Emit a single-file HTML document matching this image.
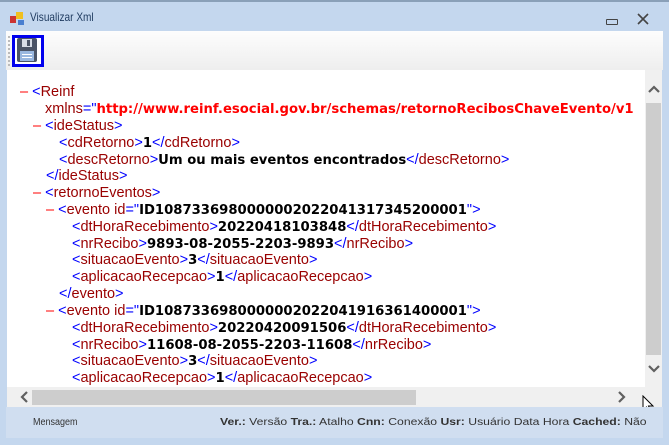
<!DOCTYPE html>
<html><head><meta charset="utf-8"><style>
body{margin:0;width:669px;height:445px;background:#c4d7ee;position:relative;overflow:hidden;font-family:"DejaVu Sans","Liberation Sans",sans-serif}
.abs{position:absolute}
.title{left:30px;top:10px;font-size:12px;color:#1e3a5f;font-family:"Liberation Sans",sans-serif;transform:scaleX(0.84);transform-origin:left}
.tb{left:6px;top:31px;width:657px;height:39px;background:linear-gradient(#fdfdfd,#eeeeee)}
.content{left:7px;top:70px;width:638px;height:317px;background:#fff;overflow:hidden}
.l{position:absolute;white-space:nowrap;font-family:"Liberation Sans",sans-serif;font-size:14.5px;line-height:17px}
.b{color:#0000ff}.r{color:#990000}.m{color:#ff0000}
.v{font-family:"DejaVu Sans",sans-serif;font-weight:bold;font-size:13.2px;color:#000}
.vr{font-family:"DejaVu Sans",sans-serif;font-weight:bold;font-size:13.2px;color:#ff0000}
.status{left:6px;top:407px;width:657px;height:31px;background:#d0def0;font-family:"Liberation Sans",sans-serif;font-size:10px;color:#333}
</style></head><body>
<div class="abs" style="left:0;top:0;width:669px;height:2px;background:#8aa0b8"></div>
<svg class="abs" style="left:10px;top:12px" width="16" height="14"><rect x="0" y="4" width="6" height="7" fill="#c33"/><rect x="6" y="0" width="7" height="7" fill="#f0c020"/><rect x="8" y="8" width="6" height="5" fill="#4a7fd0"/></svg>
<div class="abs title">Visualizar Xml</div>
<div class="abs" style="left:606px;top:19px;width:10px;height:4px;border:1px solid #444;border-radius:1px"></div>
<svg class="abs" style="left:637px;top:13px" width="12" height="12"><path d="M1 1 L11 11 M11 1 L1 11" stroke="#444" stroke-width="1.6"/></svg>
<div class="abs tb"></div>
<div class="abs" style="left:8px;top:36px;width:1px;height:30px;border-left:2px dotted #bbb"></div>
<div class="abs" style="left:12px;top:35px;width:26px;height:26px;border:3px solid #0000ee;background:#fff"></div>
<svg class="abs" style="left:17px;top:38px" width="20" height="24"><rect x="0" y="0" width="20" height="24" rx="2" fill="#4b5466"/><rect x="5" y="1" width="10" height="8" fill="#d8dde6"/><rect x="10" y="2" width="3" height="6" fill="#4b5466"/><rect x="3" y="13" width="14" height="10" fill="#9ab8e0"/><rect x="5" y="16" width="10" height="1" fill="#fff"/><rect x="5" y="19" width="10" height="1" fill="#fff"/></svg>
<div class="abs content">
<div class="l" style="left:13px;top:14px"><span class="m">–</span> <span class="b">&lt;</span><span class="r">Reinf</span></div>
<div class="l" style="left:38px;top:31px"><span class="r">xmlns</span><span class="b">="</span><span class="vr">http://www.reinf.esocial.gov.br/schemas/retornoRecibosChaveEvento/v1</span></div>
<div class="l" style="left:26px;top:48px"><span class="m">–</span> <span class="b">&lt;</span><span class="r">ideStatus</span><span class="b">&gt;</span></div>
<div class="l" style="left:52px;top:65px"><span class="b">&lt;</span><span class="r">cdRetorno</span><span class="b">&gt;</span><span class="v">1</span><span class="b">&lt;/</span><span class="r">cdRetorno</span><span class="b">&gt;</span></div>
<div class="l" style="left:52px;top:82px"><span class="b">&lt;</span><span class="r">descRetorno</span><span class="b">&gt;</span><span class="v">Um ou mais eventos encontrados</span><span class="b">&lt;/</span><span class="r">descRetorno</span><span class="b">&gt;</span></div>
<div class="l" style="left:39px;top:98px"><span class="b">&lt;/</span><span class="r">ideStatus</span><span class="b">&gt;</span></div>
<div class="l" style="left:26px;top:115px"><span class="m">–</span> <span class="b">&lt;</span><span class="r">retornoEventos</span><span class="b">&gt;</span></div>
<div class="l" style="left:39px;top:132px"><span class="m">–</span> <span class="b">&lt;</span><span class="r">evento</span> <span class="r">id</span><span class="b">="</span><span class="v">ID1087336980000002022041317345200001</span><span class="b">"&gt;</span></div>
<div class="l" style="left:65px;top:149px"><span class="b">&lt;</span><span class="r">dtHoraRecebimento</span><span class="b">&gt;</span><span class="v">20220418103848</span><span class="b">&lt;/</span><span class="r">dtHoraRecebimento</span><span class="b">&gt;</span></div>
<div class="l" style="left:65px;top:166px"><span class="b">&lt;</span><span class="r">nrRecibo</span><span class="b">&gt;</span><span class="v">9893-08-2055-2203-9893</span><span class="b">&lt;/</span><span class="r">nrRecibo</span><span class="b">&gt;</span></div>
<div class="l" style="left:65px;top:182px"><span class="b">&lt;</span><span class="r">situacaoEvento</span><span class="b">&gt;</span><span class="v">3</span><span class="b">&lt;/</span><span class="r">situacaoEvento</span><span class="b">&gt;</span></div>
<div class="l" style="left:65px;top:199px"><span class="b">&lt;</span><span class="r">aplicacaoRecepcao</span><span class="b">&gt;</span><span class="v">1</span><span class="b">&lt;/</span><span class="r">aplicacaoRecepcao</span><span class="b">&gt;</span></div>
<div class="l" style="left:52px;top:216px"><span class="b">&lt;/</span><span class="r">evento</span><span class="b">&gt;</span></div>
<div class="l" style="left:39px;top:233px"><span class="m">–</span> <span class="b">&lt;</span><span class="r">evento</span> <span class="r">id</span><span class="b">="</span><span class="v">ID1087336980000002022041916361400001</span><span class="b">"&gt;</span></div>
<div class="l" style="left:65px;top:250px"><span class="b">&lt;</span><span class="r">dtHoraRecebimento</span><span class="b">&gt;</span><span class="v">20220420091506</span><span class="b">&lt;/</span><span class="r">dtHoraRecebimento</span><span class="b">&gt;</span></div>
<div class="l" style="left:65px;top:267px"><span class="b">&lt;</span><span class="r">nrRecibo</span><span class="b">&gt;</span><span class="v">11608-08-2055-2203-11608</span><span class="b">&lt;/</span><span class="r">nrRecibo</span><span class="b">&gt;</span></div>
<div class="l" style="left:65px;top:283px"><span class="b">&lt;</span><span class="r">situacaoEvento</span><span class="b">&gt;</span><span class="v">3</span><span class="b">&lt;/</span><span class="r">situacaoEvento</span><span class="b">&gt;</span></div>
<div class="l" style="left:65px;top:300px"><span class="b">&lt;</span><span class="r">aplicacaoRecepcao</span><span class="b">&gt;</span><span class="v">1</span><span class="b">&lt;/</span><span class="r">aplicacaoRecepcao</span><span class="b">&gt;</span></div>
</div>
<div class="abs" style="left:645px;top:70px;width:17px;height:317px;background:#f0f0f0"></div>
<div class="abs" style="left:646px;top:103px;width:15px;height:252px;background:#cdcdcd"></div>
<svg class="abs" style="left:648px;top:85px" width="12" height="10"><path d="M1 7 L6 2 L11 7" stroke="#606060" stroke-width="2.2" fill="none"/></svg>
<svg class="abs" style="left:648px;top:364px" width="12" height="10"><path d="M1 2 L6 7 L11 2" stroke="#606060" stroke-width="2.2" fill="none"/></svg>
<div class="abs" style="left:7px;top:387px;width:638px;height:20px;background:#f0f0f0"></div>
<div class="abs" style="left:645px;top:387px;width:17px;height:20px;background:#f0f0f0"></div>
<div class="abs" style="left:32px;top:390px;width:384px;height:15px;background:#cdcdcd"></div>
<svg class="abs" style="left:20px;top:391px" width="10" height="12"><path d="M7 1 L2 6 L7 11" stroke="#606060" stroke-width="2.2" fill="none"/></svg>
<svg class="abs" style="left:617px;top:391px" width="10" height="12"><path d="M2 1 L7 6 L2 11" stroke="#606060" stroke-width="2.2" fill="none"/></svg>
<svg class="abs" style="left:642px;top:395px" width="14" height="20"><path d="M1 1 L1 15 L4.5 12 L7 18 L9 17 L6.5 11 L11 11 Z" fill="#fff" stroke="#000" stroke-width="1"/></svg>
<div class="abs status">
<div class="abs" style="left:27px;top:10px;transform:scaleX(0.9);transform-origin:left">Mensagem</div>
<div class="abs" style="left:214px;top:10px;white-space:nowrap;transform:scaleX(1.22);transform-origin:left"><b>Ver.:</b> Versão <b>Tra.:</b> Atalho <b>Cnn:</b> Conexão <b>Usr:</b> Usuário Data Hora <b>Cached:</b> Não</div>
</div>
<div class="abs" style="left:0;top:440px;width:669px;height:5px;background:#c4d7ee"></div>
</body></html>
